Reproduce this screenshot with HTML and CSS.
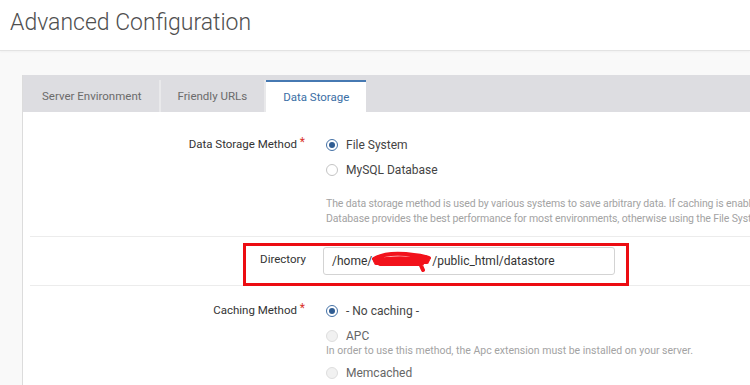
FILE: index.html
```html
<!DOCTYPE html>
<html lang="en">
<head>
    <meta charset="UTF-8">
    <title>Advanced Configuration</title>
    <link rel="stylesheet" href="styles.css">
</head>
<body>
    <div class="page-header">
        <h1>Advanced Configuration</h1>
    </div>

    <div class="page-body">
        <div class="panel">
            <div class="tabs">
                <a class="tab">Server Environment</a>
                <a class="tab">Friendly URLs</a>
                <a class="tab active">Data Storage</a>
            </div>

            <div class="form-row">
                <div class="row-label">Data Storage Method <span class="req">*</span></div>
                <div class="row-field">
                    <label class="option"><span class="radio checked"></span>File System</label>
                    <label class="option"><span class="radio"></span>MySQL Database</label>
                    <p class="hint">The data storage method is used by various systems to save arbitrary data. If caching is enabled, the MySQL<br>Database provides the best performance for most environments, otherwise using the File System is recommended.</p>
                </div>
            </div>

            <div class="form-row dir-row">
                <div class="row-label">Directory</div>
                <div class="row-field">
                    <div class="text-input">/home/<span class="redact"><svg width="60" height="22" viewBox="0 0 60 22"><path d="M2 9 C10 4, 22 3, 34 4 C44 5, 52 6, 57 8 M3 11 C14 8, 30 7, 56 10 M4 13 C18 11, 36 11, 55 12 M8 14 C26 14, 40 14, 50 14 M47 11 L51 20" fill="none" stroke="#f2121b" stroke-width="4" stroke-linecap="round"/></svg></span>/public_html/datastore</div>
                </div>
                <div class="highlight-box"></div>
            </div>

            <div class="form-row last">
                <div class="row-label">Caching Method <span class="req">*</span></div>
                <div class="row-field">
                    <label class="option"><span class="radio checked"></span>- No caching -</label>
                    <label class="option disabled"><span class="radio"></span>APC</label>
                    <p class="hint tight">In order to use this method, the Apc extension must be installed on your server.</p>
                    <label class="option disabled after-hint"><span class="radio"></span>Memcached</label>
                </div>
            </div>
        </div>
    </div>
</body>
</html>
```

FILE: styles.css
```css
html, body {
    margin: 0;
    padding: 0;
    height: 100%;
    overflow: hidden;
    background-color: #f9f9f9;
    font-family: Roboto, "Liberation Sans", sans-serif;
}

.page-header {
    height: 50px;
    background: white;
    border-bottom: 1px solid #e3e3e3;
    box-shadow: 0 1px 2px rgba(0, 0, 0, 0.04);
}

.page-header h1 {
    margin: 0;
    padding: 8px 0 0 10px;
    font-size: 23px;
    line-height: 30px;
    font-weight: 300;
    color: #4f4f4f;
}

.page-body {
    padding: 24px 0 0 22px;
}

.panel {
    background: white;
    border-left: 1px solid #dcdcdc;
    min-height: 320px;
    overflow: hidden;
}

.tabs {
    display: flex;
    align-items: flex-end;
    height: 37px;
    background: #dddde1;
}

.tab {
    display: flex;
    align-items: center;
    height: 32px;
    padding: 0 17px;
    font-size: 11.5px;
    color: #6b6b6b;
    border-right: 2px solid #e9e9eb;
}

.tab:first-child {
    padding-left: 19px;
}

.tab.active {
    height: 30px;
    background: white;
    color: #3a6ea5;
    border-top: 2px solid #4679b2;
    border-right: none;
}

.form-row {
    position: relative;
    display: flex;
    margin-left: 7px;
    padding: 20px 0 10px;
    border-bottom: 1px solid #ececec;
}

.row-label {
    width: 296px;
    flex-shrink: 0;
    text-align: right;
    padding-right: 21px;
    box-sizing: border-box;
    font-size: 11.5px;
    line-height: 25px;
    color: #333;
    white-space: nowrap;
}

.req {
    color: #d9342b;
    position: relative;
    top: -2px;
    font-size: 12px;
}

.row-field {
    flex: 1;
    white-space: nowrap;
}

.option {
    display: flex;
    align-items: center;
    height: 25px;
    font-size: 12px;
    color: #444;
}

.radio {
    width: 12px;
    height: 12px;
    border: 1px solid #c4c4c4;
    border-radius: 50%;
    box-sizing: border-box;
    margin-right: 8px;
    background: white;
    position: relative;
}

.radio.checked {
    border-color: #4471a6;
}

.radio.checked::after {
    content: "";
    position: absolute;
    left: 2px;
    top: 2px;
    width: 6px;
    height: 6px;
    border-radius: 50%;
    background: #2f5c92;
}

.option.disabled {
    color: #666;
}

.option.disabled .radio {
    background: #f1f1f1;
    border-color: #dedede;
}

.hint {
    margin: 14px 0 0;
    font-size: 10.5px;
    line-height: 15px;
    letter-spacing: -0.12px;
    color: #a3a3a3;
}

.hint.tight {
    margin-top: -4px;
    line-height: 14px;
    letter-spacing: 0;
}

.after-hint {
    margin-top: 2px;
}

.dir-row {
    padding: 10px 0 10px;
}

.dir-row .row-label {
    line-height: 24px;
    padding-right: 20px;
}

.text-input {
    width: 292px;
    height: 28px;
    margin-left: -3px;
    box-sizing: border-box;
    border: 1px solid #d3d3d3;
    border-radius: 3px;
    padding: 0 0 0 8px;
    font-size: 12px;
    line-height: 26px;
    color: #333;
    display: flex;
    align-items: center;
}

.redact {
    display: inline-block;
    width: 60px;
    height: 22px;
}

.redact svg {
    display: block;
}

.highlight-box {
    position: absolute;
    left: 213px;
    top: 6px;
    width: 386px;
    height: 43px;
    border: 3px solid #ec0c12;
    box-sizing: border-box;
    pointer-events: none;
}

.form-row.last {
    padding-top: 12px;
    border-bottom: none;
}
```
